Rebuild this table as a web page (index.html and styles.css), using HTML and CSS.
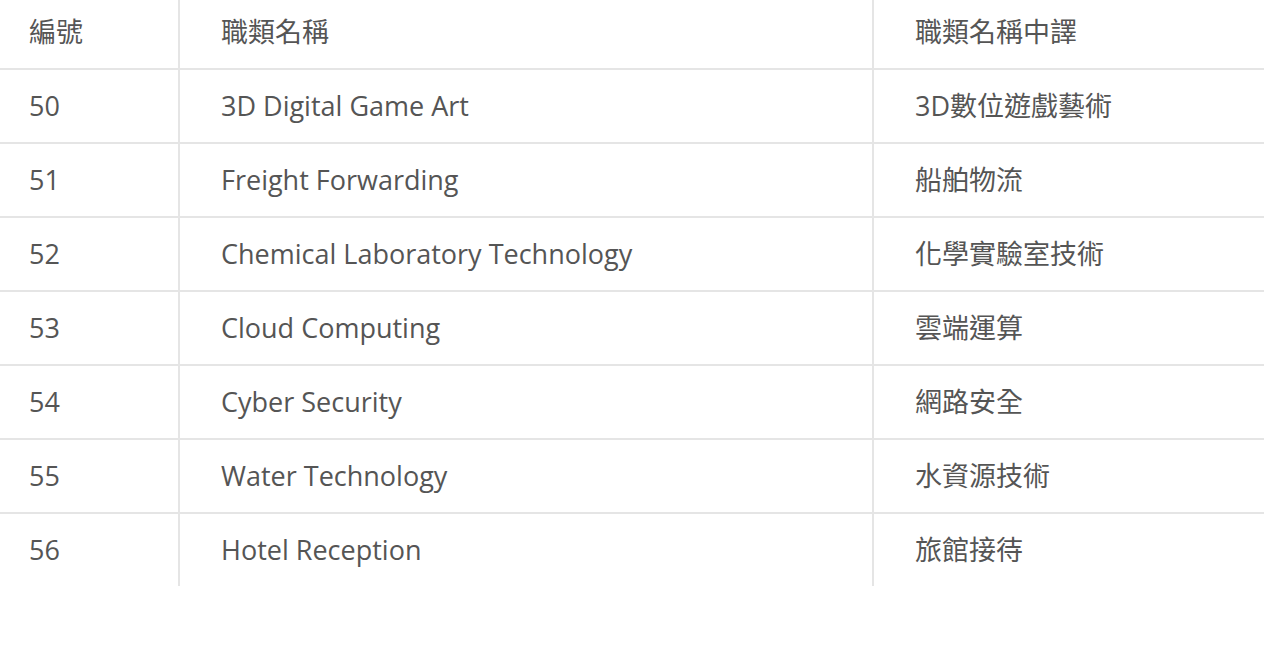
FILE: index.html
```html
<!DOCTYPE html>
<html lang="zh-Hant">
<head>
<meta charset="UTF-8">
<meta name="viewport" content="width=device-width, initial-scale=1.0">
<title>職類列表</title>
<link rel="stylesheet" href="styles.css">
</head>
<body>

<table class="jobs">
  <colgroup>
    <col class="col-no">
    <col class="col-name">
    <col class="col-zh">
  </colgroup>
  <thead>
    <tr>
      <th>編號</th>
      <th>職類名稱</th>
      <th>職類名稱中譯</th>
    </tr>
  </thead>
  <tbody>
    <tr><td>50</td><td>3D Digital Game Art</td><td>3D數位遊戲藝術</td></tr>
    <tr><td>51</td><td>Freight Forwarding</td><td>船舶物流</td></tr>
    <tr><td>52</td><td>Chemical Laboratory Technology</td><td>化學實驗室技術</td></tr>
    <tr><td>53</td><td>Cloud Computing</td><td>雲端運算</td></tr>
    <tr><td>54</td><td>Cyber Security</td><td>網路安全</td></tr>
    <tr><td>55</td><td>Water Technology</td><td>水資源技術</td></tr>
    <tr><td>56</td><td>Hotel Reception</td><td>旅館接待</td></tr>
  </tbody>
</table>

</body>
</html>
```

FILE: styles.css
```css
body {
  margin: 0;
  padding: 0;
  background-color: #fff;
  font-family: "Open Sans", "Noto Sans CJK TC", sans-serif;
  color: #555;
}
.jobs {
  width: 100%;
  border-collapse: collapse;
  table-layout: fixed;
}
.col-no {
  width: 179px;
}
.col-name {
  width: 694px;
}
.jobs th,
.jobs td {
  height: 72px;
  padding: 0 0 0 41px;
  font-size: 27px;
  line-height: 30px;
  font-weight: normal;
  text-align: left;
  vertical-align: middle;
  border-left: 2px solid #e5e5e5;
  border-bottom: 2px solid #e5e5e5;
  white-space: nowrap;
}
.jobs th {
  height: 64px;
  padding-bottom: 4px;
}
.jobs th:first-child,
.jobs td:first-child {
  border-left: none;
  padding-left: 29px;
}
.jobs tbody tr:last-child td {
  border-bottom: none;
}
```
